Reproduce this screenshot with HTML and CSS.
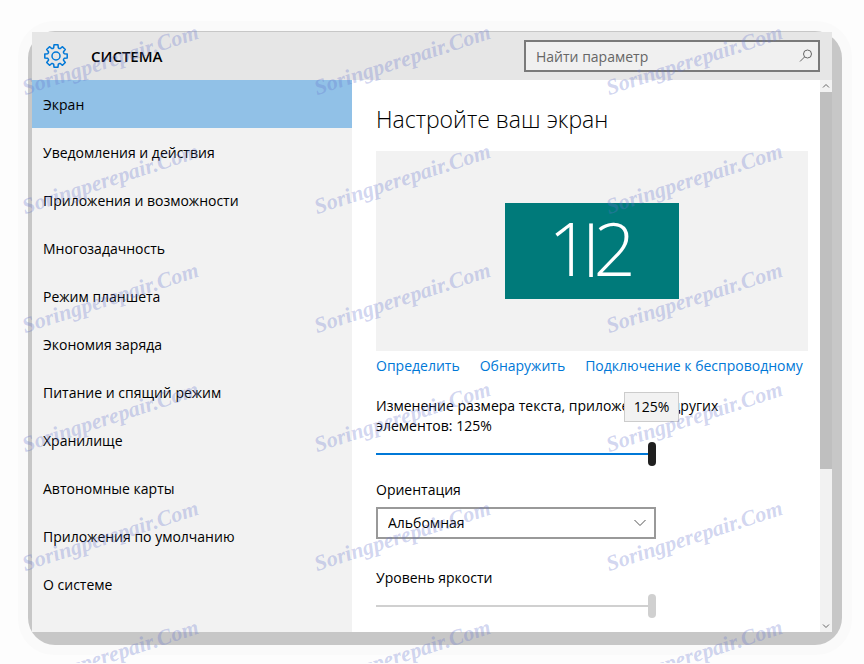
FILE: index.html
```html
<!DOCTYPE html>
<html lang="ru">
<head>
<meta charset="UTF-8">
<meta name="viewport" content="width=device-width, initial-scale=1.0">
<title>Система</title>
<link rel="stylesheet" href="styles.css">
</head>
<body>
<div class="halo">
  <div class="frame">
    <div class="window">
      <header class="topbar">
        <svg class="gear" viewBox="0 0 24 24" aria-hidden="true">
          <path d="M10 .8H14L14.3 3.7Q15.3 4.9 16.3 4.5L18.5 2.7 21.3 5.5 19.5 7.7Q19.1 8.7 20.3 9.7L23.2 10V14L20.3 14.3Q19.1 15.3 19.5 16.3L21.3 18.5 18.5 21.3 16.3 19.5Q15.3 19.1 14.3 20.3L14 23.2H10L9.7 20.3Q8.7 19.1 7.7 19.5L5.5 21.3 2.7 18.5 4.5 16.3Q4.9 15.3 3.7 14.3L.8 14V10L3.7 9.7Q4.9 8.7 4.5 7.7L2.7 5.5 5.5 2.7 7.7 4.5Q8.7 4.9 9.7 3.7Z"/>
          <circle cx="12" cy="12" r="4"/>
        </svg>
        <h1 class="title">СИСТЕМА</h1>
        <div class="search">
          <input class="search-input" type="text" placeholder="Найти параметр" aria-label="Найти параметр">
          <svg class="search-icon" viewBox="0 0 14 14" aria-hidden="true">
            <circle cx="8.5" cy="5" r="4"/>
            <path d="M5.5 8 1 12.5"/>
          </svg>
        </div>
      </header>

      <div class="content">
        <nav class="sidebar">
          <a class="item active" href="#">Экран</a>
          <a class="item" href="#">Уведомления и действия</a>
          <a class="item" href="#">Приложения и возможности</a>
          <a class="item" href="#">Многозадачность</a>
          <a class="item" href="#">Режим планшета</a>
          <a class="item" href="#">Экономия заряда</a>
          <a class="item" href="#">Питание и спящий режим</a>
          <a class="item" href="#">Хранилище</a>
          <a class="item" href="#">Автономные карты</a>
          <a class="item" href="#">Приложения по умолчанию</a>
          <a class="item" href="#">О системе</a>
        </nav>

        <main class="main">
          <h2 class="heading">Настройте ваш экран</h2>
          <div class="preview">
            <div class="monitor">1<span class="bar">|</span>2</div>
          </div>
          <div class="links">
            <a href="#">Определить</a>
            <a href="#">Обнаружить</a>
            <a href="#">Подключение к беспроводному</a>
          </div>

          <label class="label scale-label" for="scale">Изменение размера текста, приложений и других элементов: 125%</label>
          <div class="slider-box">
            <input class="slider" id="scale" type="range" min="100" max="125" value="125">
            <output class="tooltip" for="scale">125%</output>
          </div>

          <label class="label" for="orientation">Ориентация</label>
          <div class="select-box">
            <select class="select" id="orientation">
              <option>Альбомная</option>
            </select>
            <svg class="chevron" viewBox="0 0 12 8" aria-hidden="true"><path d="M.5 1 6 6.5 11.5 1"/></svg>
          </div>

          <label class="label" for="brightness">Уровень яркости</label>
          <input class="slider" id="brightness" type="range" value="100" disabled>
        </main>

        <div class="scrollbar" aria-hidden="true">
          <svg class="arrow" viewBox="0 0 12 12"><path d="M3 7.5 6 4.5l3 3"/></svg>
          <div class="thumb"></div>
          <div class="track"></div>
          <svg class="arrow" viewBox="0 0 12 12"><path d="M3 4.5l3 3 3-3"/></svg>
        </div>
      </div>
    </div>
  </div>
</div>

<div class="watermark" aria-hidden="true">
  <span>Soringperepair.Com</span><span>Soringperepair.Com</span><span>Soringperepair.Com</span>
  <span>Soringperepair.Com</span><span>Soringperepair.Com</span><span>Soringperepair.Com</span>
  <span>Soringperepair.Com</span><span>Soringperepair.Com</span><span>Soringperepair.Com</span>
  <span>Soringperepair.Com</span><span>Soringperepair.Com</span><span>Soringperepair.Com</span>
  <span>Soringperepair.Com</span><span>Soringperepair.Com</span><span>Soringperepair.Com</span>
  <span>Soringperepair.Com</span><span>Soringperepair.Com</span><span>Soringperepair.Com</span>
</div>
</body>
</html>
```

FILE: styles.css
```css
* {
    box-sizing: border-box;
}
body {
    position: relative;
    margin: 0;
    padding: 21px 12px 8px 18px;
    background: #fdfdfd;
    color: #000;
    font-family: "Open Sans", "Noto Sans", sans-serif;
    font-size: 14px;
    line-height: 20px;
}

/* window frame */
.halo {
    padding: 10px;
    border-radius: 36px;
    background: #fafafa;
}
.frame {
    padding: 1px 10px 13px 4px;
    border-radius: 27px;
    background: #c7c7c7;
}
.window {
    background: #fff;
}

/* top bar */
.topbar {
    display: flex;
    align-items: center;
    height: 48px;
    padding: 0 12px;
    background: #e6e6e6;
}
.gear {
    width: 24px;
    height: 24px;
    fill: none;
    stroke: #0078d7;
    stroke-width: 1.5;
    stroke-linejoin: round;
}
.title {
    margin: 0 auto 0 23px;
    font-size: 15px;
    font-weight: 600;
}
.search {
    position: relative;
    width: 296px;
}
.search-input {
    display: block;
    width: 100%;
    height: 32px;
    padding: 0 32px 0 10px;
    border: 2px solid #7a7a7a;
    border-radius: 0;
    background: #f0f0f0;
    font: inherit;
}
.search-input::placeholder {
    color: #666;
    opacity: 1;
}
.search-icon {
    position: absolute;
    top: 9px;
    right: 7px;
    width: 14px;
    height: 14px;
    fill: none;
    stroke: #666;
}

.content {
    display: flex;
}

/* sidebar */
.sidebar {
    flex: 0 0 40%;
    padding-bottom: 24px;
    background: #f2f2f2;
}
.item {
    display: block;
    padding: 15px 11px 13px;
    color: #000;
    text-decoration: none;
}
.item.active {
    background: #91c1e7;
}

/* main column */
.main {
    flex: 1;
    min-width: 0;
    padding: 23px 12px 0 24px;
}
.heading {
    margin: 0 0 16px;
    font-size: 23px;
    font-weight: 300;
    line-height: 32px;
}
.preview {
    display: flex;
    align-items: center;
    justify-content: center;
    height: 200px;
    background: #f2f2f2;
}
.monitor {
    width: 174px;
    height: 96px;
    background: #007a7a;
    color: #fff;
    font-size: 74px;
    font-weight: 300;
    line-height: 90px;
    text-align: center;
}
.bar {
    margin: 0 -12px 0 -14px;
    font-size: 53px;
    font-weight: 400;
    line-height: 1;
    vertical-align: 12px;
}
.links {
    display: flex;
    gap: 20px;
    margin: 5px 0 20px;
    overflow: hidden;
    white-space: nowrap;
}
.links a {
    color: #0078d7;
    text-decoration: none;
}
.label {
    display: block;
}
.scale-label {
    max-width: 380px;
}
.slider-box {
    position: relative;
    width: 280px;
    margin-bottom: 14px;
}
.slider {
    display: block;
    width: 280px;
    height: 24px;
    margin: 6px 0 0;
    background: none;
    appearance: none;
    -webkit-appearance: none;
}
.slider::-webkit-slider-runnable-track {
    height: 2px;
    background: #0078d7;
}
.slider::-webkit-slider-thumb {
    width: 8px;
    height: 24px;
    margin-top: -11px;
    border-radius: 4px;
    background: #1f1f1f;
    -webkit-appearance: none;
}
.slider:disabled::-webkit-slider-runnable-track,
.slider:disabled::-webkit-slider-thumb {
    background: #d0d0d0;
}
.tooltip {
    position: absolute;
    right: -23px;
    bottom: 44px;
    width: 55px;
    padding: 4px 0;
    border: 1px solid #ccc;
    background: #f2f2f2;
    text-align: center;
}
.select-box {
    position: relative;
    width: 280px;
    margin: 7px 0 29px;
}
.select {
    display: block;
    width: 100%;
    height: 32px;
    padding: 0 10px;
    border: 2px solid #999;
    border-radius: 0;
    background: #fff;
    color: #000;
    font: inherit;
    appearance: none;
    -webkit-appearance: none;
}
.chevron {
    position: absolute;
    top: 12px;
    right: 10px;
    width: 12px;
    height: 8px;
    fill: none;
    stroke: #555;
    pointer-events: none;
}

/* scrollbar */
.scrollbar {
    display: flex;
    flex-direction: column;
    width: 12px;
    background: #f2f2f2;
}
.arrow {
    width: 12px;
    height: 12px;
    fill: none;
    stroke: #666;
}
.thumb {
    flex: 5;
    background: #bfbfbf;
}
.track {
    flex: 2;
}

/* watermark over the whole page */
.watermark {
    position: absolute;
    inset: 0;
    display: grid;
    grid-template-columns: repeat(3, 292px);
    grid-auto-rows: 119px;
    align-items: start;
    padding: 78px 0 0 26px;
    overflow: hidden;
    pointer-events: none;
    color: rgba(100, 115, 205, 0.3);
    font-family: "Liberation Serif", serif;
    font-size: 22px;
    font-style: italic;
    font-weight: bold;
}
.watermark span {
    transform: rotate(-18deg);
    transform-origin: 0 100%;
}
```
